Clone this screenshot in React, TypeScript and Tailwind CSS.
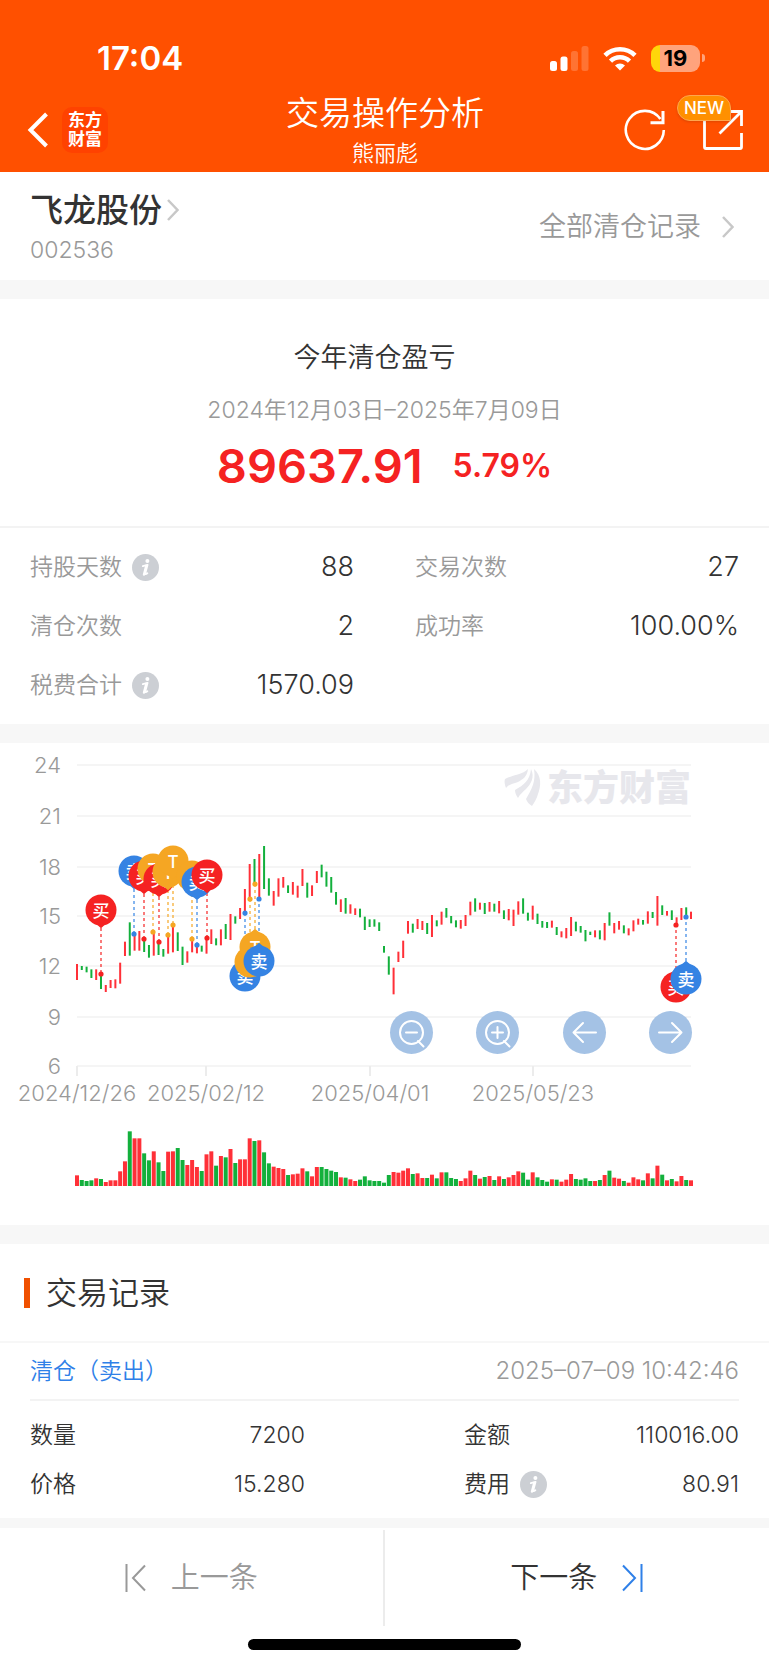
import type { ReactNode } from "react"

type Candle = [top: number, bottom: number, volume: number, up: 0 | 1]

// One entry per trading day, in thirds of a chart pixel
const CANDLES: Candle[] = [
  [672, 720, 32, 1], [678, 690, 18, 0], [680, 697, 15, 0], [688, 714, 17, 0], [688, 720, 23, 1], [702, 747, 21, 0],
  [735, 756, 12, 1], [720, 744, 17, 1], [718, 745, 17, 1], [668, 731, 44, 1], [605, 648, 74, 1], [547, 647, 164, 0],
  [583, 632, 143, 1], [573, 632, 143, 1], [600, 636, 98, 0], [615, 653, 77, 0], [580, 647, 104, 1], [605, 645, 71, 0],
  [627, 650, 45, 0], [588, 641, 103, 1], [558, 637, 104, 1], [577, 633, 114, 0], [620, 675, 78, 0], [634, 668, 63, 1],
  [600, 637, 78, 1], [618, 640, 57, 1], [617, 635, 45, 0], [595, 641, 95, 1], [568, 612, 104, 1], [595, 616, 61, 0],
  [568, 616, 90, 1], [552, 597, 86, 0], [522, 600, 111, 1], [529, 551, 69, 0], [504, 537, 80, 1], [447, 515, 80, 1],
  [372, 475, 143, 1], [357, 430, 135, 0], [342, 475, 137, 1], [318, 447, 101, 0], [415, 467, 68, 0], [453, 497, 58, 1],
  [415, 470, 54, 1], [411, 443, 51, 1], [436, 459, 33, 0], [426, 464, 35, 1], [437, 473, 37, 1], [387, 438, 53, 1],
  [428, 473, 44, 0], [436, 468, 29, 1], [393, 429, 57, 1], [374, 412, 57, 0], [395, 440, 51, 0], [411, 458, 46, 0],
  [456, 494, 42, 0], [478, 516, 26, 1], [474, 521, 25, 0], [493, 521, 20, 1], [505, 525, 15, 1], [506, 532, 19, 0],
  [530, 570, 29, 0], [538, 561, 17, 0], [538, 560, 15, 0], [547, 573, 15, 0], [618, 638, 10, 0], [649, 704, 33, 0],
  [683, 763, 42, 1], [635, 666, 40, 1], [602, 654, 46, 1], [543, 581, 53, 1], [551, 578, 36, 0], [537, 567, 38, 1],
  [543, 570, 24, 1], [549, 582, 24, 0], [525, 591, 34, 1], [541, 559, 23, 0], [515, 554, 41, 1], [504, 533, 41, 0],
  [528, 550, 24, 0], [541, 562, 21, 0], [540, 566, 15, 1], [525, 558, 23, 1], [485, 526, 46, 1], [475, 515, 33, 0],
  [488, 509, 22, 1], [489, 522, 27, 0], [486, 515, 30, 1], [491, 515, 18, 0], [483, 520, 29, 1], [511, 537, 21, 0],
  [507, 541, 26, 1], [509, 558, 33, 1], [484, 524, 44, 1], [475, 521, 40, 0], [518, 542, 19, 0], [497, 539, 41, 1],
  [521, 552, 26, 0], [543, 563, 18, 0], [546, 564, 13, 0], [542, 563, 20, 1], [561, 585, 19, 0], [574, 592, 13, 1],
  [564, 595, 19, 1], [531, 588, 36, 1], [545, 574, 21, 0], [558, 578, 19, 0], [570, 604, 23, 0], [575, 585, 15, 0],
  [571, 592, 15, 1], [571, 598, 18, 0], [549, 601, 33, 1], [517, 557, 46, 0], [549, 580, 25, 1], [543, 569, 22, 1],
  [556, 580, 15, 0], [565, 586, 10, 1], [541, 574, 26, 1], [536, 554, 20, 1], [540, 554, 17, 0], [514, 551, 38, 1],
  [516, 534, 23, 0], [468, 557, 61, 1], [496, 525, 34, 0], [513, 527, 17, 1], [511, 540, 21, 0], [532, 555, 14, 1],
  [504, 540, 30, 1], [502, 527, 18, 0], [515, 537, 17, 1],
]

const RED = "#ff3038"
const GREEN = "#13b03c"

const MARKS = {
  buy: { color: "#f52222", label: "买" },
  sell: { color: "#3583e3", label: "卖" },
  t: { color: "#f5a623", label: "T" },
}

type Mark = { kind: keyof typeof MARKS; x: number; y: number; dot: number }

// y is the middle of the balloon, dot the traded price on the line below or above it
const TRADES: Mark[] = [
  { kind: "buy", x: 101, y: 170, dot: 234 },
  { kind: "sell", x: 134, y: 131, dot: 194 },
  { kind: "buy", x: 144, y: 136, dot: 199 },
  { kind: "t", x: 153, y: 129, dot: 192 },
  { kind: "buy", x: 159, y: 139, dot: 202 },
  { kind: "t", x: 168, y: 132, dot: 195 },
  { kind: "t", x: 173, y: 121, dot: 185 },
  { kind: "t", x: 192, y: 136, dot: 199 },
  { kind: "sell", x: 197, y: 142, dot: 205 },
  { kind: "buy", x: 207, y: 135, dot: 198 },
  { kind: "sell", x: 245, y: 236, dot: 173 },
  { kind: "t", x: 250, y: 222, dot: 159 },
  { kind: "t", x: 255, y: 207, dot: 144 },
  { kind: "sell", x: 259, y: 221, dot: 159 },
  { kind: "buy", x: 676, y: 247, dot: 185 },
  { kind: "sell", x: 686, y: 239, dot: 177 },
]

const Y_AXIS = [
  { value: 24, y: 25 },
  { value: 21, y: 76 },
  { value: 18, y: 127 },
  { value: 15, y: 176 },
  { value: 12, y: 226 },
  { value: 9, y: 277 },
  { value: 6, y: 326 },
]

const X_AXIS = [
  { value: "2024/12/26", x: 77 },
  { value: "2025/02/12", x: 206 },
  { value: "2025/04/01", x: 370 },
  { value: "2025/05/23", x: 533 },
]

const dayX = (i: number) => 77 + (i * 614) / (CANDLES.length - 1)

function InfoButton({ label }: { label: string }) {
  return (
    <button type="button" aria-label={label} className="size-[27px] shrink-0">
      <svg viewBox="0 0 27 27" className="size-full">
        <circle cx="13.5" cy="13.5" r="13.5" fill="#cccfd4" />
        <circle cx="15.4" cy="7" r="2" fill="#fff" />
        <path d="M10.800 12.200L15.600 10.800L13.200 19.600Q13 20.800 15.400 19.200" fill="none" stroke="#fff" strokeWidth="1.800" strokeLinecap="round" strokeLinejoin="round" />
        <path d="M14.300 11.800L12 20.500" stroke="#fff" strokeWidth="2.400" strokeLinecap="round" />
      </svg>
    </button>
  )
}

function Chevron() {
  return (
    <svg viewBox="0 0 12 22" className="h-[22px] w-3 shrink-0" fill="none" stroke="#c8c8c8" strokeWidth="2.500">
      <path d="M1 1l9.500 10L1 21" />
    </svg>
  )
}

function StatusBar() {
  return (
    <div className="flex items-center justify-between pt-[38px] pr-16 pl-[97px]">
      <span className="text-[33px] leading-[40px] font-semibold">17:04</span>
      <div className="flex items-center gap-[14px]">
        <svg viewBox="0 0 39 25" className="h-[25px] w-[39px]" fill="#fff">
          <rect x="0" y="15" width="7" height="10" rx="2.500" />
          <rect x="10.500" y="10.500" width="7" height="14.500" rx="2.500" />
          <rect x="21" y="5" width="7" height="20" rx="2.500" opacity=".2" />
          <rect x="31.500" y="0" width="7" height="25" rx="2.500" opacity=".2" />
        </svg>
        <svg viewBox="0 0 34 25" className="h-[25px] w-[34px]" fill="none" stroke="#fff" strokeWidth="4.600">
          <path d="M2 9.300a21.500 21.500 0 0 1 30 0" />
          <path d="M7.500 15.200a13.500 13.500 0 0 1 19 0" />
          <path d="M17 24.500l-5-5a7.200 7.200 0 0 1 10 0z" fill="#fff" stroke="none" />
        </svg>
        <div className="flex items-center gap-[2px]">
          <div className="flex h-[27px] w-[49px] items-center justify-center rounded-[9px] bg-linear-to-r from-[#ffd60a] from-19% to-[#ffa37c] to-19% text-[22px] leading-[27px] font-bold text-black">
            19
          </div>
          <div className="h-2 w-[3px] rounded-r-full bg-[#ffa37c]" />
        </div>
      </div>
    </div>
  )
}

function TitleBar() {
  return (
    <div className="grid grid-cols-[1fr_auto_1fr] items-center pr-[26px] pb-1 pl-[27px]">
      <div className="flex items-center gap-[13px] pt-[3px]">
        <button type="button" aria-label="返回" className="h-9 w-[22px]">
          <svg viewBox="0 0 22 36" className="size-full" fill="none" stroke="#fff" strokeWidth="4">
            <path d="M19.500 2L3.500 18l16 16" />
          </svg>
        </button>
        <a href="#home" className="flex size-[46px] flex-col items-center justify-center rounded-[10px] bg-[#ff4200] text-[17px] leading-[19px] font-bold">
          <span>东方</span>
          <span>财富</span>
        </a>
      </div>
      <div className="text-center">
        <h1 className="text-[33px] leading-[50px]">交易操作分析</h1>
        <p className="text-[22px] leading-[30px]">熊丽彪</p>
      </div>
      <div className="flex items-center justify-end gap-[35px] pt-[3px]">
        <button type="button" aria-label="刷新" className="size-[42px]">
          <svg viewBox="0 0 42 42" className="size-full" fill="none" stroke="#fff" strokeWidth="2.600">
            <path d="M39.800 21a19 19 0 1 1-3.400-11" />
            <path d="M39 2v11.800H26.500" strokeWidth="3" />
          </svg>
        </button>
        <button type="button" aria-label="分享" className="relative size-[42px]">
          <svg viewBox="0 0 42 42" className="size-full" fill="none" stroke="#fff" strokeWidth="2.800">
            <path d="M3.500 12v26a1.500 1.500 0 0 0 1.500 1.500h34a1.500 1.500 0 0 0 1.500-1.500V24" />
            <path d="M27 2.500h13.500V17M40 3L18.500 24.500" />
          </svg>
          <span className="absolute -top-[14px] -left-6 rounded-[13px] rounded-br-none border border-[#ffa64d] bg-[#ff9000] px-[6px] text-[17px] leading-[24px] font-medium shadow-sm">
            NEW
          </span>
        </button>
      </div>
    </div>
  )
}

function Stat({ label, value, info }: { label: string; value: string; info?: boolean }) {
  return (
    <div className="flex h-[59px] items-center justify-between">
      <dt className="flex items-center gap-[10px] text-[23px] text-[#999]">
        {label}
        {info && <InfoButton label={`${label}说明`} />}
      </dt>
      <dd className="text-[27px]">{value}</dd>
    </div>
  )
}

function Field({ label, value, info }: { label: string; value: string; info?: boolean }) {
  return (
    <div className="flex h-[49px] items-center justify-between text-[23px]">
      <dt className="flex items-center gap-[10px]">
        {label}
        {info && <InfoButton label={`${label}说明`} />}
      </dt>
      <dd>{value}</dd>
    </div>
  )
}

function Balloon({ kind, x, y, dot }: Mark) {
  const { color, label } = MARKS[kind]
  const down = dot > y
  return (
    <g>
      <g transform={`translate(${x} ${y})`}>
        <circle r="15.500" fill={color} />
        <path d="M-12 10Q-5 13 0 18.300Q5 13 12 10z" fill={color} transform={down ? undefined : "scale(1 -1)"} />
      </g>
      <text x={x} y={y + 7} textAnchor="middle" fontSize="17" fontWeight="500" fill="#fff">
        {label}
      </text>
    </g>
  )
}

function ChartButton({ label, children }: { label: string; children: ReactNode }) {
  return (
    <button type="button" aria-label={label} className="size-[43px] rounded-full bg-[#a4c2e5]">
      <svg viewBox="0 0 43 43" className="size-full" fill="none" stroke="#fff" strokeWidth="2" strokeLinecap="round" strokeLinejoin="round">
        {children}
      </svg>
    </button>
  )
}

function PriceChart() {
  return (
    <div className="relative">
      <svg viewBox="0 3 769 482" className="block w-full" role="img" aria-label="股价与成交量">
        {Y_AXIS.map((tick) => (
          <g key={tick.value}>
            <path d={`M77 ${tick.y}H691`} stroke="#f5f5f5" strokeWidth="2" />
            <text x="61" y={tick.y + 8} textAnchor="end" fontSize="22" fill="#999">
              {tick.value}
            </text>
          </g>
        ))}
        {X_AXIS.map((tick) => (
          <g key={tick.value}>
            <path d={`M${tick.x} 326v10`} stroke="#ececec" strokeWidth="2" />
            <text x={tick.x} y="361" textAnchor="middle" fontSize="22" fill="#999">
              {tick.value}
            </text>
          </g>
        ))}

        <g fill="#e7e7ec">
          <path d="M505 39c7-4 17-4 23-10-1 8-5 10-10 13-5 2-9 2-12 6-1-3-2-6-1-9z" />
          <path d="M515 50c9-5 15-10 16-21 4 8 0 15-5 20-3 3-6 5-8 9-2-3-3-5-3-8z" />
          <path d="M526 59c6-10 10-18 8-30 8 7 7 17 4 25-1 4-4 9-6 12-3-2-5-4-6-7z" />
          <text x="547" y="61" fontSize="36" fontWeight="900">
            东方财富
          </text>
        </g>

        {CANDLES.map(([top, bottom, volume, up], i) => (
          <g key={i} fill={up ? RED : GREEN}>
            <rect x={dayX(i) - 1} y={top / 3} width="2" height={(bottom - top) / 3} />
            <rect x={dayX(i) - 2} y={446 - volume / 3} width="4" height={volume / 3} />
          </g>
        ))}

        {TRADES.map((trade, i) => (
          <g key={i}>
            <path
              d={`M${trade.x} ${trade.y}V${trade.dot}`}
              stroke={MARKS[trade.kind].color}
              strokeDasharray="3 3"
              strokeOpacity=".8"
              strokeWidth="1.500"
            />
            <circle cx={trade.x} cy={trade.dot} r="2.600" fill={MARKS[trade.kind].color} />
          </g>
        ))}
        {TRADES.map((trade, i) => (
          <Balloon key={i} {...trade} />
        ))}
      </svg>

      <div className="absolute top-[55.500%] right-[10%] left-[50.700%] flex justify-between">
        <ChartButton label="缩小">
          <circle cx="21.500" cy="21.500" r="11.500" />
          <path d="M16 21.500h11M28 30l5.500 5.500" />
        </ChartButton>
        <ChartButton label="放大">
          <circle cx="21.500" cy="21.500" r="11.500" />
          <path d="M16 21.500h11M21.500 16v11M28 30l5.500 5.500" />
        </ChartButton>
        <ChartButton label="向左">
          <path d="M33 21.500H10.500M20 12l-9.500 9.500L20 31" />
        </ChartButton>
        <ChartButton label="向右">
          <path d="M10 21.500h22.500M23 12l9.500 9.500L23 31" />
        </ChartButton>
      </div>
    </div>
  )
}

export default function App() {
  return (
    <div className="w-full bg-white font-[Inter,'Noto_Sans_CJK_SC',sans-serif] font-[350] text-[#333]">
      <header className="bg-[#ff5000] text-white">
        <StatusBar />
        <div className="pt-[10px]">
          <TitleBar />
        </div>
      </header>

      <section className="flex items-center justify-between border-b-[19px] border-[#f7f7f7] pt-[15px] pr-[35px] pb-[13px] pl-[30px]">
        <div>
          <a href="#stock" className="flex items-center gap-[5px]">
            <h2 className="text-[33px] leading-[46px] font-medium">飞龙股份</h2>
            <Chevron />
          </a>
          <p className="text-[23px] leading-[34px] text-[#999]">002536</p>
        </div>
        <a href="#records" className="flex items-center gap-[21px] text-[27px] text-[#999]">
          全部清仓记录
          <Chevron />
        </a>
      </section>

      <section className="border-b-[19px] border-[#f7f7f7]">
        <div className="border-b-2 border-[#f3f3f3] pt-[39px] pb-[30px] text-center">
          <h2 className="pr-5 text-[27px] leading-[40px]">今年清仓盈亏</h2>
          <p className="mt-3 text-[23px] leading-[40px] text-[#999]">2024年12月03日–2025年7月09日</p>
          <p className="mt-[6px] flex h-[60px] items-center justify-center gap-[30px] font-semibold text-[#f52222]">
            <span className="text-[47px]">89637.91</span>
            <span className="text-[32px]">5.79%</span>
          </p>
        </div>
        <dl className="grid grid-cols-2 gap-x-[61px] px-[30px] pt-[10px] pb-[9px]">
          <Stat label="持股天数" value="88" info />
          <Stat label="交易次数" value="27" />
          <Stat label="清仓次数" value="2" />
          <Stat label="成功率" value="100.00%" />
          <Stat label="税费合计" value="1570.09" info />
        </dl>
      </section>

      <section className="border-b-[19px] border-[#f7f7f7]">
        <PriceChart />
      </section>

      <section className="border-b-[10px] border-[#f7f7f7]">
        <div className="flex items-center gap-4 border-b-2 border-[#f7f7f7] py-6 pl-6">
          <span className="h-[30px] w-[6px] bg-[#f05000]" />
          <h2 className="text-[31px] leading-[49px]">交易记录</h2>
        </div>
        <div className="px-[30px]">
          <div className="flex h-[58px] items-center justify-between border-b-2 border-[#f3f3f3]">
            <span className="text-[23px] text-[#2f80e8]">清仓（卖出）</span>
            <time className="text-[24px] text-[#999]">2025–07–09 10:42:46</time>
          </div>
          <dl className="grid grid-cols-2 gap-x-[159px] pt-[10px] pb-[9px]">
            <Field label="数量" value="7200" />
            <Field label="金额" value="110016.00" />
            <Field label="价格" value="15.280" />
            <Field label="费用" value="80.91" info />
          </dl>
        </div>
      </section>

      <nav className="grid grid-cols-2 pt-[2px] text-[29px]">
        <button type="button" className="flex h-24 items-center justify-center gap-6 border-r-2 border-[#ececec] text-[#999]">
          <svg viewBox="0 0 22 28" className="h-7 w-[22px]" fill="none" stroke="currentColor" strokeWidth="2">
            <path d="M1.500 0v28M20 1.500L8 14l12 12.500" />
          </svg>
          上一条
        </button>
        <button type="button" className="flex h-24 items-center justify-center gap-6">
          下一条
          <svg viewBox="0 0 22 28" className="h-7 w-[22px]" fill="none" stroke="#2f80e8" strokeWidth="2">
            <path d="M20.500 0v28M2 1.500L14 14 2 26.500" />
          </svg>
        </button>
      </nav>
      <div className="flex justify-center pt-[13px] pb-[15px]">
        <div className="h-[11px] w-[273px] rounded-full bg-black" />
      </div>
    </div>
  )
}
